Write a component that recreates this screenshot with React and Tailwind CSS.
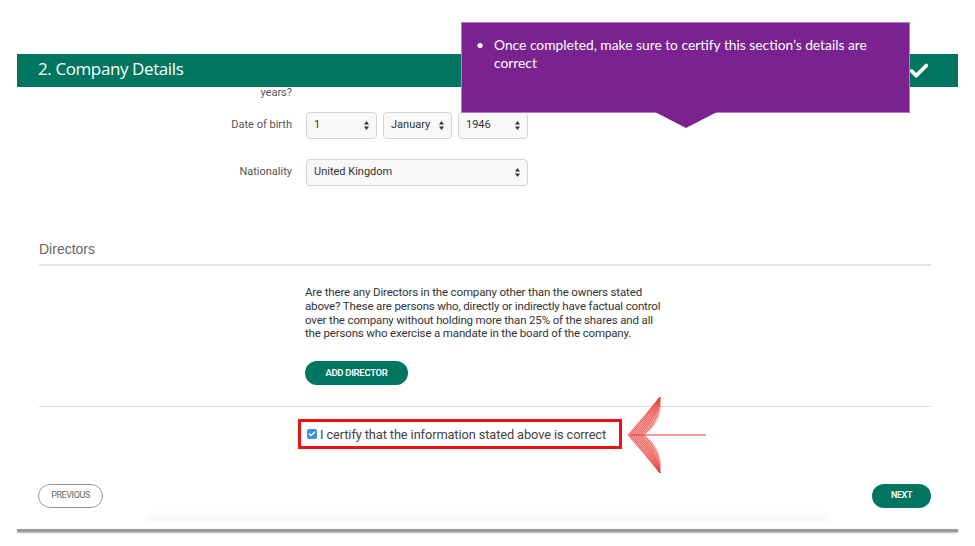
import { Check } from 'lucide-react';

const GREEN = 'bg-[#00755f]';

function Arrows() {
  return (
    <svg width="7" height="11" viewBox="0 0 7 11" className="shrink-0">
      <path d="M3.5 1 L6 4.5 L1 4.5 Z" fill="#333" />
      <path d="M3.5 10 L6 6.5 L1 6.5 Z" fill="#333" />
    </svg>
  );
}

function Select({ value, className = '' }) {
  return (
    <div className={`h-[27px] flex items-center justify-between pl-[7px] pr-[6px] bg-[#f8f8f8] border border-[#d4d4d4] rounded-[4px] text-[11px] text-[#333] ${className}`}>
      <span>{value}</span>
      <Arrows />
    </div>
  );
}

// hand-drawn annotation arrow, hatched wedge + shaft
function RedArrow() {
  const t = [0, 0.12, 0.24, 0.36, 0.48, 0.6, 0.72, 0.84, 1];
  const lerp = (a, b, k) => a + (b - a) * k;
  return (
    <svg width="86" height="80" viewBox="0 0 86 80" className="absolute left-[624px] top-[395px]">
      <path d="M4 40 Q20 22 36 2 C39 15 35 30 20 40 Z" fill="#ef5350" opacity="0.45" />
      <path d="M4 40 Q20 58 36 78 C39 65 35 50 20 40 Z" fill="#ef5350" opacity="0.45" />
      {t.map((k) => (
        <g key={k} fill="none" stroke="#e53935" strokeWidth="0.7">
          <path d={`M${lerp(4, 20, k)} 40 Q${lerp(20, 37, k)} 22 36 2`} />
          <path d={`M${lerp(4, 20, k)} 40 Q${lerp(20, 37, k)} 58 36 78`} />
        </g>
      ))}
      <line x1="6" y1="40" x2="82" y2="40" stroke="#e53935" strokeWidth="1.2" />
    </svg>
  );
}

export default function App() {
  return (
    <div className="relative w-[975px] h-[546px] bg-white overflow-hidden font-['Roboto','Liberation_Sans',sans-serif] text-[#444]">
      <div className="pt-[54px] px-[17px]">
        <div className={`${GREEN} h-[33px] flex items-center justify-between pl-[21px] pr-[28px] pb-[4px]`}>
          <span className="text-white text-[17px] font-['Open_Sans',sans-serif] tracking-[-0.4px]">2. Company Details</span>
          <Check size={22} strokeWidth={4} className="text-white mt-[4px]" />
        </div>

        <div className="flex">
          <div className="w-[275px] text-right text-[11px] leading-[11px] text-[#555]">years?</div>
        </div>

        <div className="mt-[14px] flex items-center">
          <div className="w-[275px] text-right text-[11px] text-[#555]">Date of birth</div>
          <div className="ml-[14px] flex gap-[6px]">
            <Select value="1" className="w-[71px]" />
            <Select value="January" className="w-[69px]" />
            <Select value="1946" className="w-[70px]" />
          </div>
        </div>

        <div className="mt-[20px] flex items-center">
          <div className="w-[275px] text-right text-[11px] text-[#555]">Nationality</div>
          <Select value="United Kingdom" className="ml-[14px] w-[222px]" />
        </div>

        <div className="ml-[22px] mr-[27px] mt-[53px] border-b-2 border-[#e3e3e3] pb-[4px]">
          <div className="text-[14px] text-[#666] font-['Liberation_Sans',sans-serif]">Directors</div>
        </div>

        <div className="ml-[22px] mr-[27px] border-b border-[#dcdcdc] pb-[21px]">
          <div className="ml-[266px] pt-[20px]">
            <p className="text-[11.5px] leading-[13.8px] text-[#333] tracking-[-0.15px]">
              Are there any Directors in the company other than the owners stated
              <br />
              above? These are persons who, directly or indirectly have factual control
              <br />
              over the company without holding more than 25% of the shares and all
              <br />
              the persons who exercise a mandate in the board of the company.
            </p>
            <button className={`${GREEN} mt-[20px] h-[24px] w-[103px] rounded-full text-white text-[9.5px] font-semibold tracking-[-0.3px]`}>
              ADD DIRECTOR
            </button>
          </div>
        </div>

        <div className="mt-[12px] ml-[281px] w-[324px] h-[30px] border-[3px] border-[#ee1111] flex items-center pl-[6px] gap-[3px]">
          <div className="w-[10px] h-[10px] rounded-[2px] bg-[#3a8ee6] flex items-center justify-center">
            <Check size={8} strokeWidth={4} className="text-white" />
          </div>
          <span className="text-[12.8px] text-[#444] tracking-[-0.1px]">I certify that the information stated above is correct</span>
        </div>

        <div className="mt-[35px] ml-[21px] mr-[27px] flex justify-between">
          <button className="h-[24px] w-[65px] rounded-full border border-[#999] bg-white text-[9px] text-[#666] tracking-[-0.4px]">
            PREVIOUS
          </button>
          <button className={`${GREEN} h-[24px] w-[59px] rounded-full text-white text-[9px] font-semibold tracking-[-0.4px]`}>
            NEXT
          </button>
        </div>

        <div className="mt-[14px] mx-[130px] h-[7px] shadow-[0_-6px_10px_rgba(0,0,0,0.06)]" />
        <div className="h-[3px] bg-[#9a9a9a] shadow-[0_1px_2px_rgba(0,0,0,0.3)]" />
      </div>

      <RedArrow />

      <div className="absolute left-[461px] top-[22px] w-[449px] h-[91px] bg-[#7a2290] border border-[#b47cc4] pl-[14px] pt-[13px] pr-[30px]">
        <div className="flex gap-[10px] text-white text-[13.8px] leading-[18px] font-['Lato',sans-serif]">
          <span>•</span>
          <span>Once completed, make sure to certify this section’s details are correct</span>
        </div>
      </div>
      <div className="absolute left-[655px] top-[112px] w-0 h-0 border-l-[31px] border-r-[31px] border-t-[16px] border-l-transparent border-r-transparent border-t-[#7a2290]" />
    </div>
  );
}
